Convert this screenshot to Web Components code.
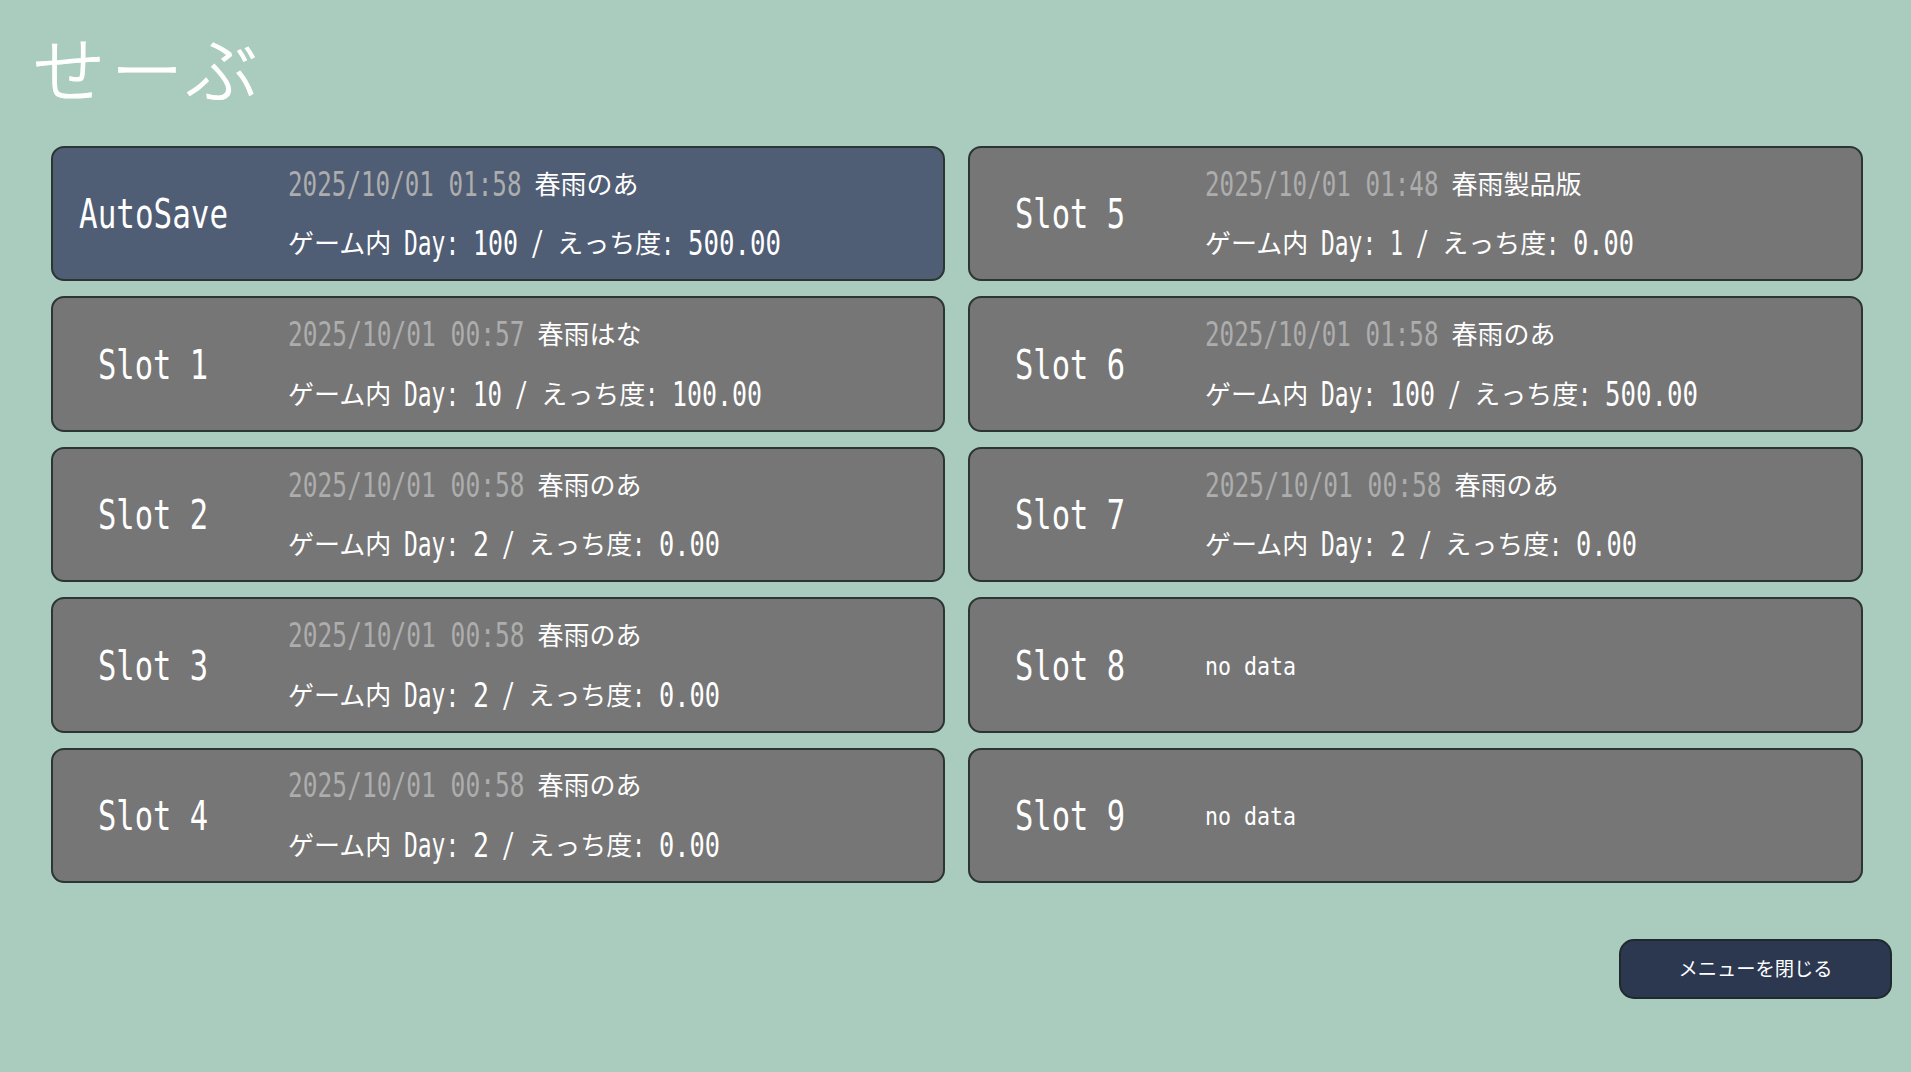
<!DOCTYPE html>
<html lang="ja">
<head>
<meta charset="utf-8">
<title>せーぶ</title>
<style>
html,body{margin:0;padding:0;background:#aaccbe;}
</style>
</head>
<body>
<save-screen>
  <save-title slot="title">せーぶ</save-title>
  <save-slot label="AutoSave" active date="2025/10/01 01:58" name="春雨のあ" day="100" love="500.00"></save-slot>
  <save-slot label="Slot 5" date="2025/10/01 01:48" name="春雨製品版" day="1" love="0.00"></save-slot>
  <save-slot label="Slot 1" date="2025/10/01 00:57" name="春雨はな" day="10" love="100.00"></save-slot>
  <save-slot label="Slot 6" date="2025/10/01 01:58" name="春雨のあ" day="100" love="500.00"></save-slot>
  <save-slot label="Slot 2" date="2025/10/01 00:58" name="春雨のあ" day="2" love="0.00"></save-slot>
  <save-slot label="Slot 7" date="2025/10/01 00:58" name="春雨のあ" day="2" love="0.00"></save-slot>
  <save-slot label="Slot 3" date="2025/10/01 00:58" name="春雨のあ" day="2" love="0.00"></save-slot>
  <save-slot label="Slot 8"></save-slot>
  <save-slot label="Slot 4" date="2025/10/01 00:58" name="春雨のあ" day="2" love="0.00"></save-slot>
  <save-slot label="Slot 9"></save-slot>
  <close-button slot="footer">メニューを閉じる</close-button>
</save-screen>
<script>
const ADV = {'1':13,'.':13,'/':12.5,' ':13,':':12.5};
const runWidth = s => [...s].reduce((w,c)=>w+(ADV[c] ?? (/[0-9]/.test(c)?16:13.75)),0);

/* A narrow, tall latin run: keeps real text, squeezed horizontally to the pixel font's advance. */
class PxText extends HTMLElement{
  connectedCallback(){
    if(this.shadowRoot) return;
    const text=this.textContent;
    const size=+(this.getAttribute('size')||33);
    const width=+(this.getAttribute('width'))||runWidth(text);
    const natural=[...text].length*size*0.602;
    const root=this.attachShadow({mode:'open'});
    root.innerHTML=`<style>
      :host{display:inline-block;width:${width}px;line-height:1;white-space:pre;vertical-align:var(--px-shift,-2px);
        font-family:"DejaVu Sans Mono",monospace;font-size:${size}px;}
      span{display:inline-block;transform:scaleX(${(width/natural).toFixed(4)});transform-origin:0 50%;}
    </style><span><slot></slot></span>`;
  }
}
customElements.define('px-text',PxText);

class SaveTitle extends HTMLElement{
  constructor(){
    super();
    this.attachShadow({mode:'open'}).innerHTML=`<style>
      :host{display:block;height:146px;box-sizing:border-box;padding:24px 0 0 33px;color:#fff;
        font:300 72px/84px "Noto Sans CJK JP",sans-serif;letter-spacing:6px;-webkit-text-stroke:1.2px #fff;}
    </style><slot></slot>`;
  }
}
customElements.define('save-title',SaveTitle);

class SaveSlot extends HTMLElement{
  connectedCallback(){
    if(this.shadowRoot) return;
    const a=n=>this.getAttribute(n);
    const date=a('date');
    const body=date?`
      <div class="line"><px-text class="date">${date}</px-text><px-text> </px-text><span>${a('name')}</span></div>
      <div class="line"><span>ゲーム内</span><px-text> </px-text><px-text width="69">Day: </px-text><px-text>${a('day')}</px-text><px-text width="39"> / </px-text><span>えっち度</span><px-text width="26.5">: </px-text><px-text>${a('love')}</px-text></div>
    `:`<div class="line empty"><px-text size="25" width="91">no data</px-text></div>`;
    const label=a('label');
    const root=this.attachShadow({mode:'open'});
    root.innerHTML=`<style>
      :host{display:flex;align-items:center;box-sizing:border-box;height:135.4px;
        background:#767676;border:2px solid #2c3533;border-radius:13px;color:#fff;
        font-family:"Noto Sans CJK JP",sans-serif;font-size:26px;}
      :host([active]){background:#4f5d75;}
      .label{flex:none;width:206px;box-sizing:border-box;padding-top:2.5px;text-align:center;line-height:1;--px-shift:0px;margin-left:-3px;}
      .info{margin-left:32px;padding-bottom:2.5px;display:flex;flex-direction:column;}
      .line{height:59.6px;line-height:59.6px;white-space:nowrap;}
      .date{color:#adadad;}
      .empty{--px-shift:0px;}
    </style>
    <div class="label"><px-text size="41" width="${label==='AutoSave'?149:110}">${label}</px-text></div>
    <div class="info">${body}</div>`;
  }
}
customElements.define('save-slot',SaveSlot);

class CloseButton extends HTMLElement{
  constructor(){
    super();
    this.attachShadow({mode:'open'}).innerHTML=`<style>
      :host{display:flex;align-items:center;justify-content:center;box-sizing:border-box;width:273px;height:60px;
        background:#2b3850;border:2px solid #1f2a2c;border-radius:15px;color:#fff;
        font:400 19.3px/1 "Noto Sans CJK JP",sans-serif;}
    </style><slot></slot>`;
  }
}
customElements.define('close-button',CloseButton);

class SaveScreen extends HTMLElement{
  constructor(){
    super();
    this.attachShadow({mode:'open'}).innerHTML=`<style>
      :host{display:flex;flex-direction:column;box-sizing:border-box;width:1911px;height:1072px;background:#aaccbe;overflow:hidden;}
      .grid{display:grid;grid-template-columns:894px 895px;column-gap:23px;row-gap:15px;margin-left:51px;}
      .foot{display:flex;justify-content:flex-end;margin-top:56px;padding-right:19px;}
    </style>
    <slot name="title"></slot>
    <div class="grid"><slot></slot></div>
    <div class="foot"><slot name="footer"></slot></div>`;
  }
}
customElements.define('save-screen',SaveScreen);
</script>
</body>
</html>
